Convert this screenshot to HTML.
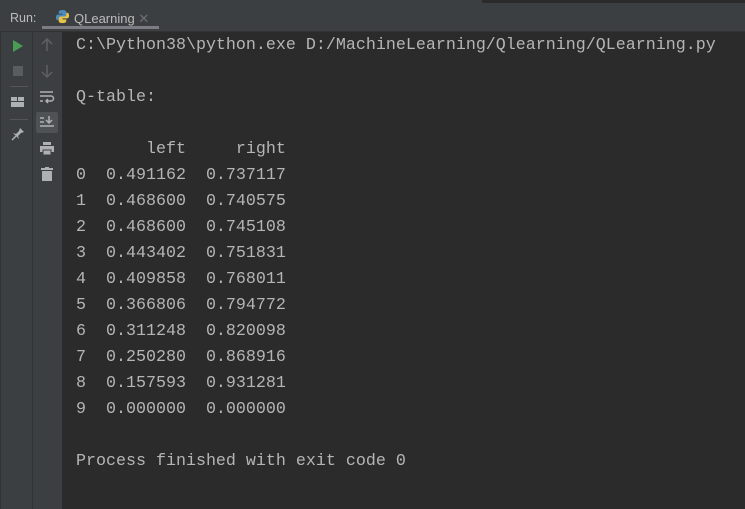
<!DOCTYPE html><html><head><style>
body{margin:0;width:745px;height:509px;background:#2b2b2b;overflow:hidden;position:relative;font-family:"Liberation Sans",sans-serif}
.top{position:absolute;left:0;top:0;width:745px;height:3px;background:#2b2b2b}
.top i{position:absolute;left:0;top:0;width:482px;height:3px;background:#3c3f41}
.hdr{position:absolute;left:0;top:3px;width:745px;height:28px;background:#3c3f41;border-bottom:1px solid #323232}
.run{position:absolute;left:10px;top:8px;font-size:12.5px;color:#bbbbbb}
.tab{position:absolute;left:55px;top:8px;font-size:13px;color:#bbbbbb}
.ul{position:absolute;left:42px;top:26px;width:117px;height:3px;background:#7a7e82}
.tb1{position:absolute;left:0;top:32px;width:33px;height:477px;background:#3c3f41;border-left:1px solid #323232;border-right:1px solid #323232;box-sizing:border-box}
.tb2{position:absolute;left:33px;top:32px;width:29px;height:477px;background:#3c3f41}
pre{position:absolute;left:76px;top:33px;margin:0;font-family:"Liberation Mono",monospace;font-size:16.67px;line-height:26px;color:#b5b5b5}
.sep{position:absolute;left:9px;width:18px;height:1px;background:#555}
</style></head><body>
<div class="top"><i></i></div>
<div class="hdr"><span class="run">Run:</span>
<svg style="position:absolute;left:55px;top:6px" width="15" height="15" viewBox="0 0 16 16"><path d="M8 1C4 1 4 3 4 3v2h4v1H3S1 6 1 9s2 3 2 3h1v-2s0-2 2-2h4s2 0 2-2V3s0-2-4-2z" fill="#4b8bbe"/><path d="M8 15c4 0 4-2 4-2v-2H8v-1h5s2 0 2-3-2-3-2-3h-1v2s0 2-2 2H6S4 8 4 10v3s0 2 4 2z" fill="#e8c34a"/></svg>
<span class="tab" style="left:74px">QLearning <span style="color:#6e7173">✕</span></span></div>
<div class="ul"></div>
<div class="tb1">
<svg style="position:absolute;left:11px;top:8px" width="12" height="12"><path d="M1 0L11 6L1 12Z" fill="#499c54"/></svg>
<div style="position:absolute;left:12px;top:34px;width:10px;height:10px;background:#5a5d5f"></div>
<div class="sep" style="top:54px"></div>
<svg style="position:absolute;left:10px;top:65px" width="14" height="11"><rect x="0" y="0" width="6" height="4" fill="#aeb1b3"/><rect x="7" y="0" width="6" height="4" fill="#aeb1b3"/><rect x="0" y="5" width="13" height="5" fill="#aeb1b3"/></svg>
<div class="sep" style="top:87px"></div>
<svg style="position:absolute;left:10px;top:95px" width="14" height="14"><path d="M9 1L13 5L10 6L7 9L8 12L2 6L5 7L8 4Z" fill="#aeb1b3"/><path d="M5 9L1 13" stroke="#aeb1b3" stroke-width="1.5"/></svg>
</div>
<div class="tb2">
<svg style="position:absolute;left:7px;top:6px" width="14" height="14"><path d="M7 1V13M2 6L7 1L12 6" stroke="#5e6163" stroke-width="1.5" fill="none"/></svg>
<svg style="position:absolute;left:7px;top:32px" width="14" height="14"><path d="M7 1V13M2 8L7 13L12 8" stroke="#5e6163" stroke-width="1.5" fill="none"/></svg>
<svg style="position:absolute;left:6px;top:58px" width="16" height="14"><path d="M1 2H14M1 6H12a2 2 0 0 1 0 5H7M9 9L7 11L9 13M1 11H4" stroke="#aeb1b3" stroke-width="1.5" fill="none"/></svg>
<div style="position:absolute;left:3px;top:80px;width:22px;height:21px;background:#4e5254;border-radius:2px"></div>
<svg style="position:absolute;left:6px;top:83px" width="16" height="14"><path d="M1 3H5M1 7H5M1 11H15M10 1V8M7 5L10 8L13 5" stroke="#aeb1b3" stroke-width="1.5" fill="none"/></svg>
<svg style="position:absolute;left:7px;top:110px" width="14" height="14"><rect x="3" y="0" width="8" height="3" fill="#aeb1b3"/><rect x="0" y="4" width="14" height="6" fill="#aeb1b3"/><rect x="3" y="8" width="8" height="5" fill="#aeb1b3" stroke="#3c3f41"/></svg>
<svg style="position:absolute;left:8px;top:135px" width="12" height="14"><rect x="0" y="1" width="12" height="2" fill="#aeb1b3"/><rect x="4" y="0" width="4" height="2" fill="#aeb1b3"/><rect x="1" y="4" width="10" height="10" fill="#aeb1b3"/></svg>
</div>
<pre>C:\Python38\python.exe D:/MachineLearning/Qlearning/QLearning.py

Q-table:

       left     right
0  0.491162  0.737117
1  0.468600  0.740575
2  0.468600  0.745108
3  0.443402  0.751831
4  0.409858  0.768011
5  0.366806  0.794772
6  0.311248  0.820098
7  0.250280  0.868916
8  0.157593  0.931281
9  0.000000  0.000000

Process finished with exit code 0</pre>
</body></html>
